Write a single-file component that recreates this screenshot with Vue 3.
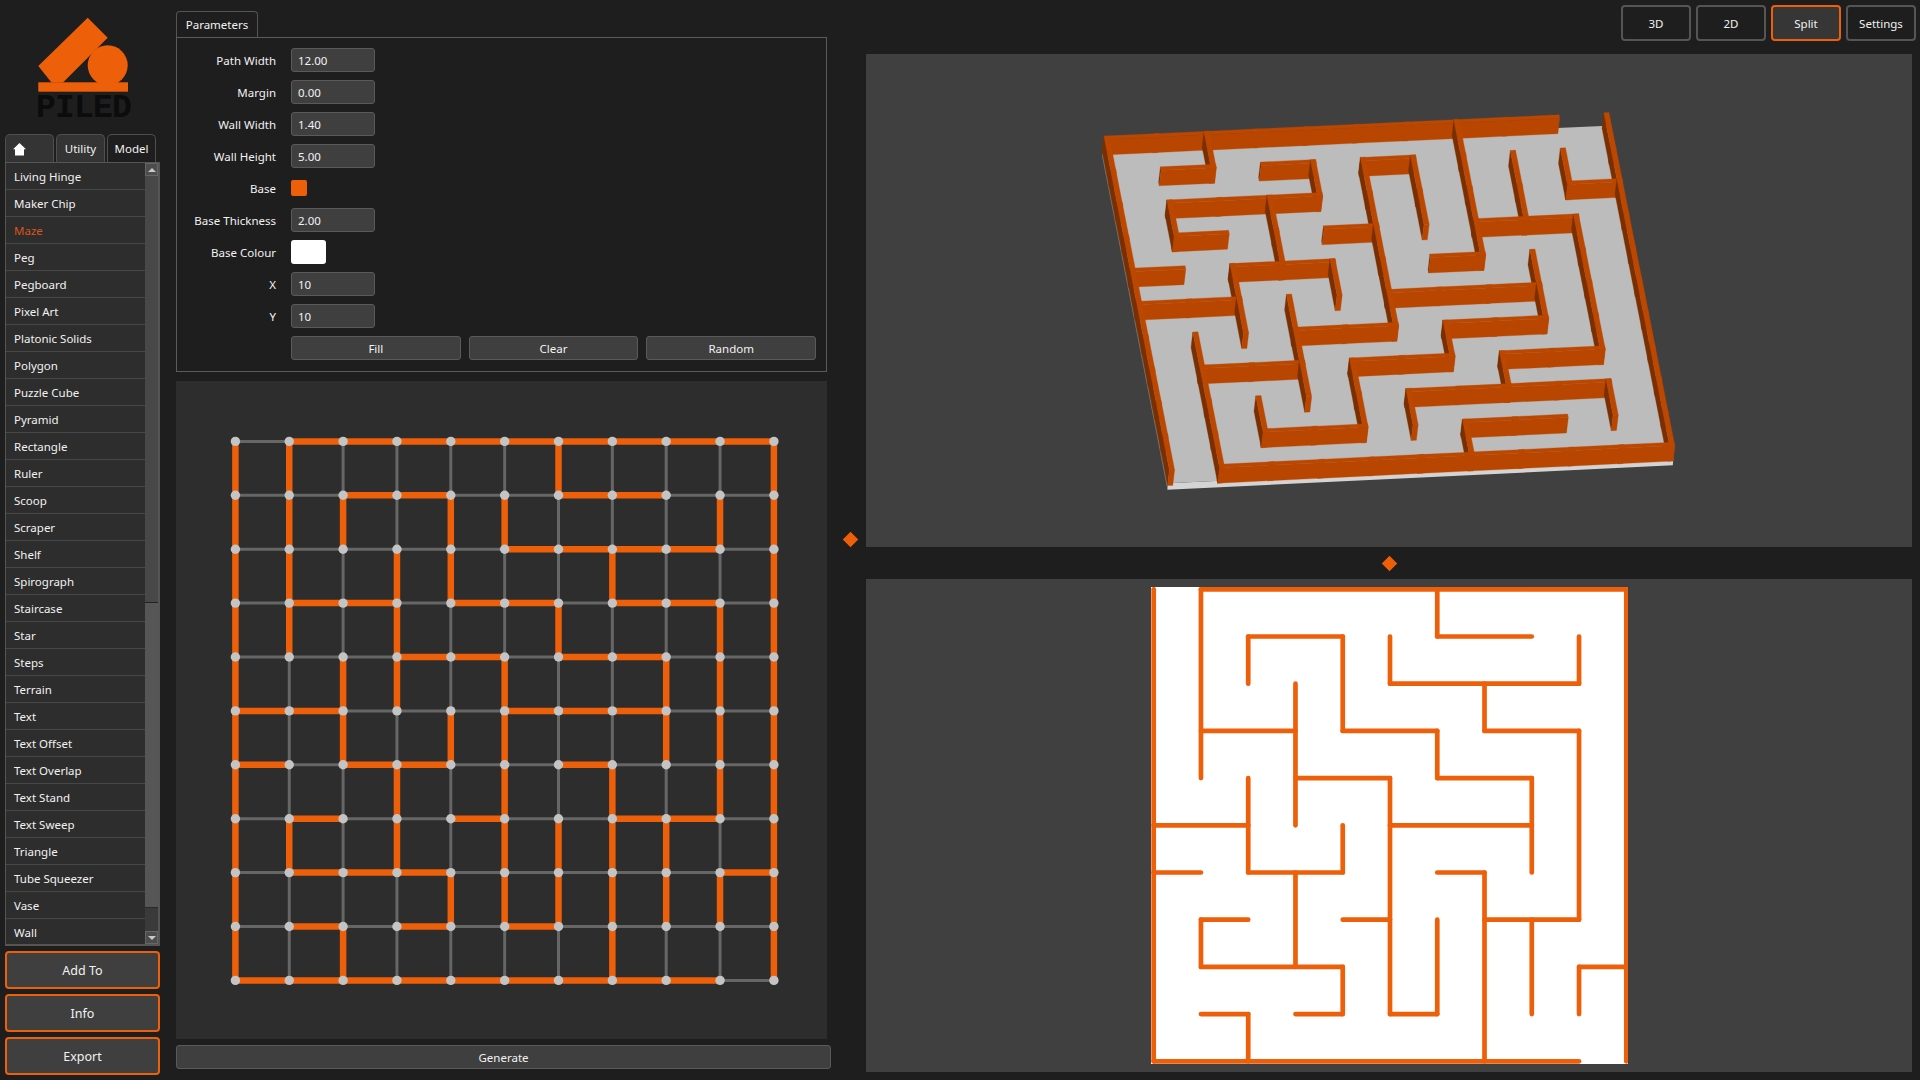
<template>
  <div class="app">
    <aside class="sidebar">
      <svg class="logo" width="155" height="134" viewBox="5 0 155 134">
        <path d="M38.3 66 87.7 17.7 107.7 37.7 63 82.5H51.5Z" fill="#ee5f0a" />
        <circle cx="107.7" cy="65.3" r="20" fill="#ee5f0a" />
        <rect x="38.3" y="82.3" width="89.7" height="9.4" fill="#ee5f0a" />
        <text x="36" y="116.5" class="logo-text">PILED</text>
      </svg>
      <div class="tabs">
        <div class="tab home">
          <svg width="13" height="14" viewBox="0 0 13 14"><path d="M6.5 1 13 7.2H11V13.5H2V7.2H0Z" fill="#fff" /></svg>
        </div>
        <div class="tab">Utility</div>
        <div class="tab dark">Model</div>
      </div>
      <div class="list-box">
        <div class="list">
          <div v-for="item in items" :key="item" class="list-item" :class="{ active: item === 'Maze' }">{{ item }}</div>
        </div>
        <div class="scrollbar">
          <div class="scroll-btn"><span class="arrow up"></span></div>
          <div class="track-top"></div>
          <div class="thumb"></div>
          <div class="track-bottom"></div>
          <div class="scroll-btn"><span class="arrow down"></span></div>
        </div>
      </div>
      <button class="side-btn">Add To</button>
      <button class="side-btn">Info</button>
      <button class="side-btn">Export</button>
    </aside>

    <section class="params-col">
      <div class="param-tab">Parameters</div>
      <div class="param-panel">
        <div v-for="row in params" :key="row.label" class="param-row">
          <label>{{ row.label }}</label>
          <div v-if="row.type === 'check'" class="check"></div>
          <div v-else-if="row.type === 'colour'" class="colour"></div>
          <div v-else class="field">{{ row.value }}</div>
        </div>
        <div class="param-row">
          <label></label>
          <div class="param-btns">
            <button class="btn">Fill</button>
            <button class="btn">Clear</button>
            <button class="btn">Random</button>
          </div>
        </div>
      </div>
      <div class="editor">
        <svg width="651" height="658" viewBox="0 0 651 658">
          <g stroke="#666" stroke-width="3">
            <line v-for="n in 11" :key="'gh' + n" :x1="ex(0)" :x2="ex(10)" :y1="ey(n - 1)" :y2="ey(n - 1)" />
            <line v-for="n in 11" :key="'gv' + n" :y1="ey(0)" :y2="ey(10)" :x1="ex(n - 1)" :x2="ex(n - 1)" />
          </g>
          <g stroke="#ee5f0a" stroke-width="6.5">
            <line v-for="s in segments" :key="s.key" :x1="ex(s.c1)" :y1="ey(s.r1)" :x2="ex(s.c2)" :y2="ey(s.r2)" />
          </g>
          <g fill="#c4c4c4">
            <template v-for="r in 11" :key="'dr' + r">
              <circle v-for="c in 11" :key="c" :cx="ex(c - 1)" :cy="ey(r - 1)" r="4.7" />
            </template>
          </g>
        </svg>
      </div>
      <button class="btn generate">Generate</button>
    </section>

    <div class="splitter-v"><span class="diamond"></span></div>

    <section class="views">
      <div class="view-bar">
        <button class="view-btn">3D</button>
        <button class="view-btn">2D</button>
        <button class="view-btn on">Split</button>
        <button class="view-btn">Settings</button>
      </div>
      <div class="view">
        <svg width="1046" height="493" viewBox="866 54 1046 493">
          <polygon :points="plate.left" fill="#777" />
          <polygon :points="plate.front" fill="#d4d4d4" />
          <polygon :points="plate.floor" fill="#bcbcbc" />
          <g v-for="b in boxes" :key="b.key">
            <polygon :points="b.left" fill="#7a2f00" stroke="#7a2f00" stroke-width="0.3" />
            <polygon :points="b.front" fill="#b84600" stroke="#b84600" stroke-width="0.3" />
            <polygon :points="b.top" fill="#bb4700" stroke="#bb4700" stroke-width="0.3" />
          </g>
        </svg>
      </div>
      <div class="splitter-h"><span class="diamond"></span></div>
      <div class="view flat">
        <div class="sheet">
          <svg width="477" height="477" viewBox="0 0 477 477">
            <g stroke="#ee5f0a" stroke-width="4.7" stroke-linecap="round">
              <line v-for="w in flatWalls" :key="w.key" :x1="fx(w.c1)" :y1="fy(w.r1)" :x2="fx(w.c2)" :y2="fy(w.r2)" />
            </g>
          </svg>
        </div>
      </div>
    </section>
  </div>
</template>

<script setup>
const items = [
  'Living Hinge', 'Maker Chip', 'Maze', 'Peg', 'Pegboard', 'Pixel Art', 'Platonic Solids', 'Polygon',
  'Puzzle Cube', 'Pyramid', 'Rectangle', 'Ruler', 'Scoop', 'Scraper', 'Shelf', 'Spirograph', 'Staircase',
  'Star', 'Steps', 'Terrain', 'Text', 'Text Offset', 'Text Overlap', 'Text Stand', 'Text Sweep', 'Triangle',
  'Tube Squeezer', 'Vase', 'Wall',
]

const params = [
  { label: 'Path Width', value: '12.00' },
  { label: 'Margin', value: '0.00' },
  { label: 'Wall Width', value: '1.40' },
  { label: 'Wall Height', value: '5.00' },
  { label: 'Base', type: 'check' },
  { label: 'Base Thickness', value: '2.00' },
  { label: 'Base Colour', type: 'colour' },
  { label: 'X', value: '10' },
  { label: 'Y', value: '10' },
]

// maze walls: [row, from col, to col] and [col, from row, to row]
const hWalls = [
  [0, 1, 10], [1, 2, 4], [1, 6, 8], [2, 5, 9], [3, 1, 3], [3, 4, 6], [3, 7, 9], [4, 3, 5], [4, 6, 8],
  [5, 0, 2], [5, 5, 8], [6, 0, 1], [6, 2, 4], [6, 6, 7], [7, 1, 2], [7, 4, 5], [7, 7, 9], [8, 1, 4],
  [8, 9, 10], [9, 1, 2], [9, 3, 4], [9, 5, 6], [10, 0, 9],
]
const vWalls = [
  [0, 0, 10], [1, 0, 4], [1, 7, 8], [2, 1, 2], [2, 4, 6], [2, 9, 10], [3, 2, 5], [3, 6, 8], [4, 1, 3],
  [4, 5, 6], [4, 8, 9], [5, 1, 2], [5, 4, 9], [6, 0, 1], [6, 3, 4], [6, 7, 9], [7, 2, 3], [7, 6, 10],
  [8, 4, 6], [8, 7, 9], [9, 1, 2], [9, 3, 7], [9, 8, 9], [10, 0, 10],
]

const flatWalls = [
  ...hWalls.map(([r, a, b]) => ({ key: `h${r}-${a}`, c1: a, c2: b, r1: r, r2: r })),
  ...vWalls.map(([c, a, b]) => ({ key: `v${c}-${a}`, c1: c, c2: c, r1: a, r2: b })),
]

// the same walls cut into single cells, for the 3D painter's sort
const segments = []
for (const w of flatWalls) {
  const horizontal = w.r1 === w.r2
  const len = horizontal ? w.c2 - w.c1 : w.r2 - w.r1
  for (let i = 0; i < len; i++) {
    segments.push({
      key: `${w.key}-${i}`,
      c1: horizontal ? w.c1 + i : w.c1,
      c2: horizontal ? w.c1 + i + 1 : w.c1,
      r1: horizontal ? w.r1 : w.r1 + i,
      r2: horizontal ? w.r1 : w.r1 + i + 1,
    })
  }
}

const ex = (c) => 59.4 + c * 53.85
const ey = (r) => 60.4 + r * 53.9
const fx = (c) => 2.7 + c * 47.26
const fy = (r) => 2.3 + r * 47.2

// wall-top plane corners on screen
const TL = [1106.9, 137.7]
const TR = [1606.7, 114.3]
const BR = [1671.9, 444]
const BL = [1171.7, 468.3]
const DROP = [-1.8, 15.5]
const HALF = 0.052

function project(c, row) {
  const u = c / 10
  const v = row / 10
  return [0, 1].map((i) =>
    (1 - v) * ((1 - u) * TL[i] + u * TR[i]) + v * ((1 - u) * BL[i] + u * BR[i]))
}

const pts = (list) => list.map((p) => p.map((n) => n.toFixed(1)).join(',')).join(' ')
const shift = (p, d, k = 1) => [p[0] + d[0] * k, p[1] + d[1] * k]

const boxes = segments
  .map((s) => {
    const c0 = Math.min(s.c1, s.c2) - HALF
    const c1 = Math.max(s.c1, s.c2) + HALF
    const r0 = 10 - Math.max(s.r1, s.r2) - HALF
    const r1 = 10 - Math.min(s.r1, s.r2) + HALF
    const a = project(c0, r0)
    const b = project(c1, r0)
    const c = project(c1, r1)
    const d = project(c0, r1)
    return {
      key: s.key,
      depth: (r0 + r1) / 2,
      east: (c0 + c1) / 2,
      top: pts([a, b, c, d]),
      front: pts([d, c, shift(c, DROP), shift(d, DROP)]),
      left: pts([a, d, shift(d, DROP), shift(a, DROP)]),
    }
  })
  .sort((p, q) => p.depth - q.depth || q.east - p.east)

const plate = (() => {
  const drop = [-1.5, 13.2]
  const a = shift(project(-HALF, -HALF), drop)
  const b = shift(project(10 + HALF, -HALF), drop)
  const c = shift(project(10 + HALF, 10 + HALF), drop)
  const d = shift(project(-HALF, 10 + HALF), drop)
  const thick = [-0.5, 6.5]
  return {
    floor: pts([a, b, c, d]),
    front: pts([d, c, shift(c, thick), shift(d, thick)]),
    left: pts([a, d, shift(d, thick), shift(a, thick)]),
  }
})()
</script>

<style>
html, body {
  margin: 0;
  background: #1e1e1e;
}
</style>

<style scoped>
.app {
  display: flex;
  width: 1920px;
  height: 1080px;
  overflow: hidden;
  background: #1e1e1e;
  color: #f2f2f2;
  font-family: "Noto Sans", "Open Sans", sans-serif;
  font-size: 11.5px;
}

button {
  font-family: inherit;
  font-size: 11.5px;
  color: #f2f2f2;
  padding: 0;
}

.sidebar {
  width: 155px;
  margin-left: 5px;
  display: flex;
  flex-direction: column;
}

.logo {
  display: block;
  flex: none;
}

.logo-text {
  font-family: "Liberation Mono", monospace;
  font-weight: 700;
  font-size: 33px;
  letter-spacing: -0.8px;
  fill: #0c0c0c;
}

.tabs {
  display: flex;
  gap: 2px;
  height: 28px;
}

.tab {
  display: flex;
  align-items: center;
  justify-content: center;
  background: #343434;
  border: 1px solid #4f4f4f;
  border-bottom: none;
  border-radius: 5px 5px 0 0;
  box-sizing: border-box;
  flex: 0 0 49px;
}

.tab.home {
  justify-content: flex-start;
  padding-left: 7px;
}

.tab.dark {
  background: #1e1e1e;
}

.list-box {
  display: flex;
  height: 784px;
  box-sizing: border-box;
  background: #2d2d2d;
  border: 1px solid #555;
  border-width: 1px 2px 2px 1px;
  margin-bottom: 5px;
}

.list {
  flex: 1;
}

.list-item {
  height: 27px;
  box-sizing: border-box;
  line-height: 27px;
  padding-left: 8px;
  border-bottom: 1px solid #474747;
}

.list-item:last-child {
  border-bottom: none;
}

.list-item.active {
  color: #d9541a;
}

.scrollbar {
  width: 13px;
  display: flex;
  flex-direction: column;
  background: #3a3a3a;
}

.scroll-btn {
  height: 13px;
  flex: none;
  background: #4d4d4d;
  border: 1px solid #666;
  box-sizing: border-box;
  display: flex;
  align-items: center;
  justify-content: center;
}

.arrow {
  width: 0;
  height: 0;
  border-left: 4px solid transparent;
  border-right: 4px solid transparent;
}

.arrow.up {
  border-bottom: 4px solid #c8c8c8;
}

.arrow.down {
  border-top: 4px solid #c8c8c8;
}

.track-top {
  height: 426px;
  background: #484848;
}

.thumb {
  height: 305px;
  background: #565656;
  border-top: 1px solid #222;
  box-sizing: border-box;
}

.track-bottom {
  flex: 1;
  background: #3a3a3a;
  border-top: 1px solid #2a2a2a;
}

.side-btn {
  height: 38px;
  margin-bottom: 5px;
  background: #3f3f3f;
  border: 2px solid #ee5f0a;
  border-radius: 4px;
  font-size: 12.5px;
  flex: none;
}

.params-col {
  width: 655px;
  margin-left: 16px;
  display: flex;
  flex-direction: column;
}

.param-tab {
  width: 82px;
  height: 26px;
  margin-top: 11px;
  box-sizing: border-box;
  border: 1px solid #555;
  border-bottom: none;
  border-radius: 4px 4px 0 0;
  text-align: center;
  line-height: 26px;
}

.param-panel {
  width: 651px;
  height: 335px;
  box-sizing: border-box;
  border: 1px solid #5a5a5a;
  padding-top: 10px;
  display: flex;
  flex-direction: column;
  gap: 8px;
}

.param-row {
  display: flex;
  align-items: center;
  gap: 15px;
  height: 24px;
}

.param-row label {
  width: 99px;
  flex: none;
  text-align: right;
}

.field {
  width: 84px;
  height: 24px;
  box-sizing: border-box;
  background: #3f3f3f;
  border: 1px solid #5a5a5a;
  border-radius: 3px;
  padding-left: 6px;
  line-height: 23px;
}

.check {
  width: 16px;
  height: 16px;
  background: #ee5f0a;
  border-radius: 2px;
}

.colour {
  width: 35px;
  height: 24px;
  background: #fff;
  border-radius: 3px;
}

.param-btns {
  display: flex;
  gap: 8px;
  width: 525px;
}

.btn {
  height: 24px;
  flex: 1;
  background: #3f3f3f;
  border: 1px solid #5a5a5a;
  border-radius: 3px;
}

.editor {
  width: 651px;
  height: 658px;
  margin-top: 9px;
  background: #2d2d2d;
}

.editor svg {
  display: block;
}

.generate {
  flex: none;
  width: 655px;
  margin-top: 6px;
}

.splitter-v {
  width: 35px;
  display: flex;
  align-items: flex-start;
  justify-content: center;
  padding: 532px 0 0 3px;
  box-sizing: border-box;
  flex: none;
}

.diamond {
  display: block;
  width: 11px;
  height: 11px;
  margin-top: 2px;
  background: #ee5f0a;
  transform: rotate(45deg);
}

.views {
  width: 1046px;
  flex: none;
  display: flex;
  flex-direction: column;
}

.view-bar {
  height: 54px;
  display: flex;
  gap: 5px;
  justify-content: flex-end;
  margin-right: -4px;
  padding-top: 5px;
  box-sizing: border-box;
}

.view-btn {
  width: 70px;
  height: 36px;
  background: #1e1e1e;
  border: 2px solid #555;
  border-radius: 4px;
}

.view-btn.on {
  background: #363636;
  border-color: #ee5f0a;
}

.view {
  height: 493px;
  background: #404040;
}

.view svg {
  display: block;
}

.flat {
  display: flex;
  align-items: center;
  justify-content: center;
}

.sheet {
  width: 477px;
  height: 477px;
  background: #fff;
}

.splitter-h {
  height: 32px;
  display: flex;
  align-items: center;
  justify-content: center;
}

.splitter-h .diamond {
  margin-top: 0;
}
</style>
